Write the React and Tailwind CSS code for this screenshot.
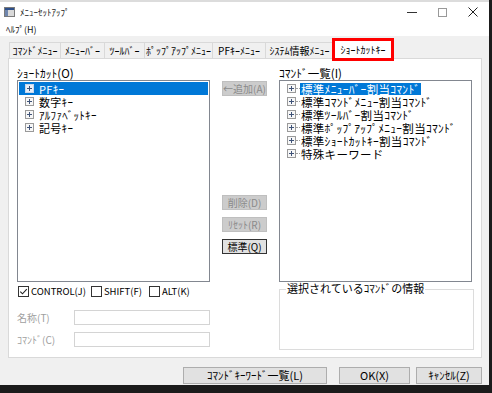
import React from "react";

const tabs = [
    { label: "ｺﾏﾝﾄﾞﾒﾆｭｰ", w: "w-[52px]" },
    { label: "ﾒﾆｭｰﾊﾞｰ", w: "w-[45px]" },
    { label: "ﾂｰﾙﾊﾞｰ", w: "w-[41px]" },
    { label: "ﾎﾟｯﾌﾟｱｯﾌﾟﾒﾆｭｰ", w: "w-[69px]" },
    { label: "PFｷｰﾒﾆｭｰ", w: "w-[54px]" },
    { label: "ｼｽﾃﾑ情報ﾒﾆｭｰ", w: "w-[69px]" },
];

const shortcuts = ["PFｷｰ", "数字ｷｰ", "ｱﾙﾌｧﾍﾞｯﾄｷｰ", "記号ｷｰ"];

const commands = [
    "標準ﾒﾆｭｰﾊﾞｰ割当ｺﾏﾝﾄﾞ",
    "標準ｺﾏﾝﾄﾞﾒﾆｭｰ割当ｺﾏﾝﾄﾞ",
    "標準ﾂｰﾙﾊﾞｰ割当ｺﾏﾝﾄﾞ",
    "標準ﾎﾟｯﾌﾟｱｯﾌﾟﾒﾆｭｰ割当ｺﾏﾝﾄﾞ",
    "標準ｼｮｰﾄｶｯﾄｷｰ割当ｺﾏﾝﾄﾞ",
    "特殊キーワード",
];

const PlusBox = ({ onBlue }) => (
    <svg width="9" height="9" viewBox="0 0 9 9" className="shrink-0">
        <rect x="0.5" y="0.5" width="8" height="8" fill={onBlue ? "#e8eef7" : "#f7f7f7"} stroke={onBlue ? "#c9d7ea" : "#9a9a9a"} />
        <path d="M2 4.5h5M4.5 2v5" stroke="#3f5378" />
    </svg>
);

const CheckBox = ({ checked }) => (
    <svg width="11" height="11" viewBox="0 0 11 11" className="shrink-0">
        <rect x="0.5" y="0.5" width="10" height="10" fill="#fff" stroke="#333" />
        {checked && <path d="M2.3 5.6l2.2 2.2 4.3-4.6" fill="none" stroke="#222" strokeWidth="1.1" />}
    </svg>
);

const SmallButton = ({ children, disabled, focused }) => (
    <div
        className={
            "h-[15px] w-[45px] flex items-center justify-center border text-[10px] leading-none " +
            (disabled
                ? "bg-[#cccccc] border-[#bfbfbf] text-[#8a8a8a]"
                : focused
                ? "bg-[#e1e1e1] border-[#333] text-black"
                : "bg-[#e1e1e1] border-[#adadad] text-black")
        }
    >
        {children}
    </div>
);

const App = () => {
    return (
        <div className="w-[492px] h-[393px] bg-[#1b1b1b] overflow-hidden font-['Noto_Sans_CJK_JP','Noto_Sans',sans-serif] text-black">
            <div className="w-[489px] h-[385px] bg-[#f0f0f0] flex flex-col border-t-2 border-[#dcdcdc]">
                {/* title bar */}
                <div className="h-[20px] bg-white flex items-center pl-[4px]">
                    <svg width="11" height="10" viewBox="0 0 11 10" className="shrink-0">
                        <rect x="0.5" y="0.5" width="10" height="9" fill="#d9d9d9" stroke="#7a7a7a" />
                        <rect x="1" y="1" width="9" height="2" fill="#2d4f8a" />
                        <rect x="1" y="3" width="3" height="6" fill="#6f86ad" />
                    </svg>
                    <span className="ml-[5px] text-[9px] leading-none text-[#222]">ﾒﾆｭｰｾｯﾄｱｯﾌﾟ</span>
                    <div className="ml-auto flex items-center h-full">
                        <div className="w-[30px] h-full flex items-center justify-center">
                            <div className="w-[10px] h-px bg-[#333]" />
                        </div>
                        <div className="w-[30px] h-full flex items-center justify-center">
                            <div className="w-[9px] h-[9px] border border-[#999]" />
                        </div>
                        <div className="w-[32px] h-full flex items-center justify-center">
                            <svg width="10" height="10" viewBox="0 0 10 10">
                                <path d="M0.5 0.5l9 9M9.5 0.5l-9 9" stroke="#222" strokeWidth="1" />
                            </svg>
                        </div>
                    </div>
                </div>
                {/* menu bar */}
                <div className="h-[14px] bg-white flex items-center pl-[6px]">
                    <span className="text-[9px] leading-none text-[#111]">ﾍﾙﾌﾟ(H)</span>
                </div>

                {/* tabs */}
                <div className="mt-[2px] pl-[9px] flex items-end h-[20px]">
                    {tabs.map(t => (
                        <div
                            key={t.label}
                            className={t.w + " h-[16px] border border-b-0 border-[#d9d9d9] bg-[#f0f0f0] -ml-px first:ml-0 flex items-center justify-center text-[10px] leading-none whitespace-nowrap"}
                        >
                            {t.label}
                        </div>
                    ))}
                    <div className="relative w-[60px] h-[19px] -ml-px -mb-px bg-white border border-b-0 border-[#d9d9d9] flex items-center justify-center text-[10px] leading-none z-10">
                        ｼｮｰﾄｶｯﾄｷｰ
                        <div className="absolute -inset-x-[2px] -top-[3px] -bottom-[2px] border-[3px] border-[#ff0000]" />
                    </div>
                </div>

                {/* tab panel */}
                <div className="ml-[8px] w-[474px] h-[300px] bg-white border border-[#d9d9d9] pl-[8px] pt-[8px] flex flex-col">
                    <div className="flex">
                        {/* left list */}
                        <div className="w-[193px] flex flex-col">
                            <div className="h-[13px] text-[11.5px] leading-[13px] whitespace-nowrap">ｼｮｰﾄｶｯﾄ(O)</div>
                            <div className="h-[202px] border border-[#828790] bg-white p-px">
                                {shortcuts.map((s, i) => (
                                    <div
                                        key={s}
                                        className={
                                            "h-[13px] flex items-center pl-[6px] gap-[5px] text-[11px] leading-[12px] " +
                                            (i === 0 ? "bg-[#0078d7] text-white" : "")
                                        }
                                    >
                                        <PlusBox onBlue={i === 0} />
                                        <span className="whitespace-nowrap tracking-[0.3px]">{s}</span>
                                    </div>
                                ))}
                            </div>
                        </div>

                        {/* middle buttons */}
                        <div className="ml-[12px] w-[45px] flex flex-col pt-[14px]">
                            <SmallButton disabled>←追加(A)</SmallButton>
                            <div className="mt-[99px] flex flex-col gap-[7px]">
                                <SmallButton disabled>削除(D)</SmallButton>
                                <SmallButton disabled>ﾘｾｯﾄ(R)</SmallButton>
                                <SmallButton focused>標準(Q)</SmallButton>
                            </div>
                        </div>

                        {/* right list */}
                        <div className="ml-[12px] w-[193px] flex flex-col">
                            <div className="h-[13px] text-[11.5px] leading-[13px] whitespace-nowrap">ｺﾏﾝﾄﾞ一覧(I)</div>
                            <div className="h-[202px] border border-[#828790] bg-white p-px">
                                {commands.map((c, i) => (
                                    <div key={c} className="h-[13px] flex items-center pl-[6px] text-[11.5px] leading-[12px]">
                                        <PlusBox />
                                        <div className="w-[4px] border-t border-dotted border-[#a0a0a0]" />
                                        <span className={"px-px whitespace-nowrap tracking-[0.3px] " + (i === 0 ? "bg-[#0078d7] text-white" : "")}>{c}</span>
                                    </div>
                                ))}
                            </div>
                        </div>
                    </div>

                    <div className="flex mt-[3px]">
                        {/* left controls */}
                        <div className="w-[193px] flex flex-col">
                            <div className="h-[13px] flex items-center pl-px text-[9.5px] leading-none">
                                <CheckBox checked />
                                <span className="ml-[2px]">CONTROL(J)</span>
                                <span className="ml-[5px]"><CheckBox /></span>
                                <span className="ml-[2px]">SHIFT(F)</span>
                                <span className="ml-[7px]"><CheckBox /></span>
                                <span className="ml-[2px]">ALT(K)</span>
                            </div>
                            <div className="mt-[12px] flex items-center">
                                <span className="w-[57px] text-[10px] leading-none text-[#a0a0a0]">名称(T)</span>
                                <div className="w-[136px] h-[15px] border border-[#d4d4d4] bg-white" />
                            </div>
                            <div className="mt-[7px] flex items-center">
                                <span className="w-[57px] text-[10px] leading-none text-[#a0a0a0]">ｺﾏﾝﾄﾞ(C)</span>
                                <div className="w-[136px] h-[15px] border border-[#d4d4d4] bg-white" />
                            </div>
                        </div>

                        {/* group box */}
                        <div className="ml-[69px] mt-[4px] relative w-[195px] h-[61px] border border-[#dcdcdc]">
                            <span className="absolute left-[6px] -top-[7px] bg-white px-px text-[11px] leading-none whitespace-nowrap">選択されているｺﾏﾝﾄﾞの情報</span>
                        </div>
                    </div>
                </div>

                {/* bottom buttons */}
                <div className="mt-[9px] flex pl-[183px] gap-[12px]">
                    <div className="w-[144px] h-[17px] bg-[#e1e1e1] border border-[#adadad] flex items-center justify-center text-[11px] leading-none">ｺﾏﾝﾄﾞｷｰﾜｰﾄﾞ一覧(L)</div>
                    <div className="flex gap-[6px]">
                        <div className="w-[71px] h-[17px] bg-[#e1e1e1] border border-[#adadad] flex items-center justify-center text-[11px] leading-none">OK(X)</div>
                        <div className="w-[66px] h-[17px] bg-[#e1e1e1] border border-[#adadad] flex items-center justify-center text-[11px] leading-none">ｷｬﾝｾﾙ(Z)</div>
                    </div>
                </div>
            </div>
        </div>
    );
};

export default App;
